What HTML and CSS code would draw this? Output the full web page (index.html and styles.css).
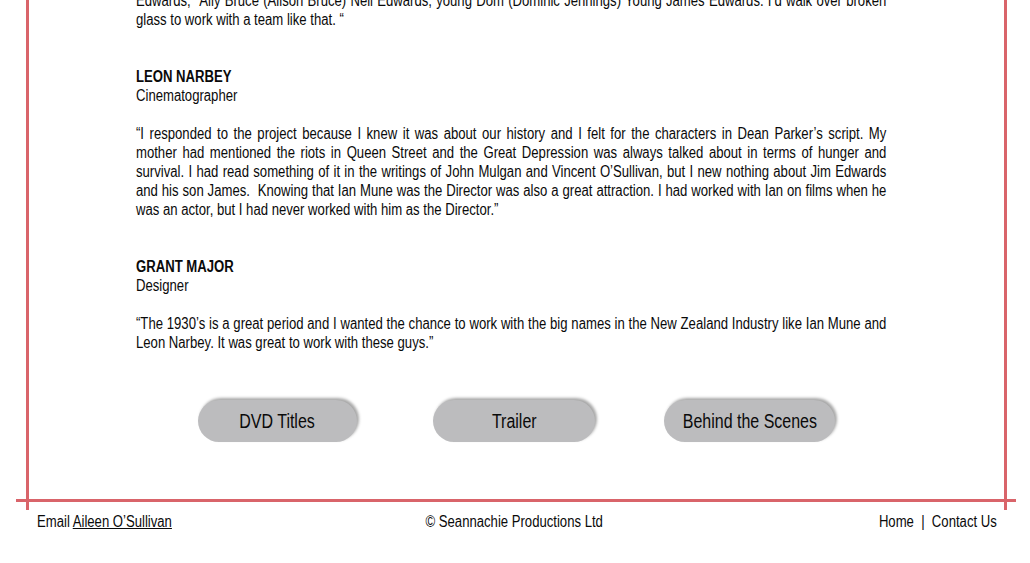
FILE: index.html
```html
<!DOCTYPE html>
<html lang="en">
<head>
<meta charset="utf-8">
<title>Seannachie Productions – Crew</title>
<link rel="stylesheet" href="styles.css">
</head>
<body>
<div class="page">
  <div class="content">
    <div class="text">
      <p class="quote lead">Edwards, “Ally Bruce (Alison Bruce) Neil Edwards, young Dom (Dominic Jennings) Young James Edwards. I’d walk over broken glass to work with a team like that. “</p>

      <div class="person">
        <div class="name">LEON NARBEY</div>
        <div class="role">Cinematographer</div>
        <p class="quote">“I responded to the project because I knew it was about our history and I felt for the characters in Dean Parker’s script. My mother had mentioned the riots in Queen Street and the Great Depression was always talked about in terms of hunger and survival. I had read something of it in the writings of John Mulgan and Vincent O’Sullivan, but I new nothing about Jim Edwards and his son James.&nbsp; Knowing that Ian Mune was the Director was also a great attraction. I had worked with Ian on films when he was an actor, but I had never worked with him as the Director.”</p>
      </div>

      <div class="person">
        <div class="name">GRANT MAJOR</div>
        <div class="role">Designer</div>
        <p class="quote">“The 1930’s is a great period and I wanted the chance to work with the big names in the New Zealand Industry like Ian Mune and Leon Narbey. It was great to work with these guys.”</p>
      </div>
    </div>

    <nav class="buttons">
      <a class="btn btn-dvd" href="#"><span class="narrow">DVD Titles</span></a>
      <a class="btn btn-trailer" href="#"><span class="narrow">Trailer</span></a>
      <a class="btn btn-behind" href="#"><span class="narrow">Behind the Scenes</span></a>
    </nav>
  </div>
  <div class="rule"></div>
</div>
<footer class="footer">
  <div class="f-left"><span class="narrow left">Email <a href="#">Aileen O’Sullivan</a></span></div>
  <div class="f-center"><span class="narrow">© Seannachie Productions Ltd</span></div>
  <div class="f-right"><span class="narrow right"><a href="#">Home</a>&nbsp; |&nbsp; <a href="#">Contact Us</a></span></div>
</footer>
</body>
</html>
```

FILE: styles.css
```css
html, body {
  margin: 0;
  padding: 0;
  background: #ffffff;
  overflow: hidden;
}

body {
  font-family: "Liberation Sans", Arial, sans-serif;
  font-size: 16px;
  line-height: 19px;
  color: #0a0a0a;
}

.page {
  margin-left: 26px;
  width: 975px;
  border-left: 3px solid #d9646a;
  border-right: 3px solid #d9646a;
}

.content {
  padding: 0 118px 0 107px;
}

/* Condensed text: Arial Narrow is not installed, so scale Liberation Sans horizontally */
.text {
  width: 915px;
  transform: scaleX(0.82);
  transform-origin: left top;
}

.narrow {
  display: inline-block;
  transform: scaleX(0.82);
  transform-origin: center center;
}

.narrow.left { transform-origin: left center; }
.narrow.right { transform-origin: right center; }

.quote {
  margin: 0;
  text-align: justify;
}

.lead {
  margin-top: -9px;
}

.person {
  margin-top: 38px;
}

.name {
  font-weight: bold;
}

.role {
  margin-bottom: 19px;
}

.buttons {
  display: flex;
  padding: 48px 0 57px 62px;
}

.btn {
  display: flex;
  align-items: center;
  justify-content: center;
  height: 42px;
  border-radius: 21px;
  background: #bcbcbe;
  box-shadow: 2px -2px 3px rgba(0, 0, 0, 0.35);
  color: #0a0a0a;
  font-size: 19.5px;
  text-decoration: none;
}

.btn-dvd { width: 159px; }
.btn-trailer { width: 162px; margin-left: 76px; }
.btn-behind { width: 171px; margin-left: 69px; }

.rule {
  margin: 0 -12px 0 -13px;
  height: 8px;
  border-top: 3px solid #d9646a;
}

.footer {
  width: 960px;
  margin-left: 37px;
  display: grid;
  grid-template-columns: 1fr auto 1fr;
  padding-top: 2px;
  line-height: 19px;
}

.footer a {
  color: #0a0a0a;
}

.f-left a {
  text-decoration: underline;
}

.f-center {
  text-align: center;
  padding-right: 6px;
}

.f-right {
  text-align: right;
}

.f-right a {
  text-decoration: none;
}
```
